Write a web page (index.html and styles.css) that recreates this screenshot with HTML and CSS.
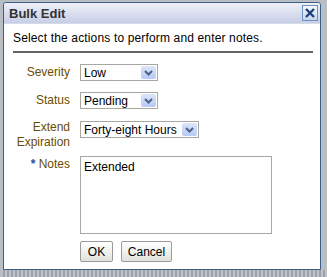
FILE: index.html
```html
<!DOCTYPE html>
<html lang="en">
<head>
    <meta charset="UTF-8">
    <title>Bulk Edit</title>
    <link rel="stylesheet" href="styles.css">
</head>
<body>
    <div class="dialog">
        <div class="titlebar">
            <span class="title">Bulk Edit</span>
            <span class="close">
                <svg width="10" height="10" viewBox="0 0 10 10"><path d="M1 1 L9 9 M9 1 L1 9" stroke="#1f3f7a" stroke-width="2.4"/></svg>
            </span>
        </div>
        <div class="content">
            <p class="intro">Select the actions to perform and enter notes.</p>
            <div class="rule"></div>

            <div class="row row-severity">
                <label class="label">Severity</label>
                <div class="select w-short"><span>Low</span><span class="arrow"><svg width="9" height="6" viewBox="0 0 9 6"><path d="M1 1 L4.5 4.5 L8 1" fill="none" stroke="#4d6185" stroke-width="2"/></svg></span></div>
            </div>
            <div class="row row-status">
                <label class="label">Status</label>
                <div class="select w-short"><span>Pending</span><span class="arrow"><svg width="9" height="6" viewBox="0 0 9 6"><path d="M1 1 L4.5 4.5 L8 1" fill="none" stroke="#4d6185" stroke-width="2"/></svg></span></div>
            </div>
            <div class="row row-extend">
                <label class="label two-line">Extend<br>Expiration</label>
                <div class="select w-long"><span>Forty-eight Hours</span><span class="arrow"><svg width="9" height="6" viewBox="0 0 9 6"><path d="M1 1 L4.5 4.5 L8 1" fill="none" stroke="#4d6185" stroke-width="2"/></svg></span></div>
            </div>
            <div class="row row-notes">
                <label class="label"><span class="req">*</span> Notes</label>
                <div class="notes">Extended</div>
            </div>
            <div class="buttons">
                <button class="btn btn-ok">OK</button>
                <button class="btn btn-cancel">Cancel</button>
            </div>
        </div>
    </div>
    <div class="behind"></div>
</body>
</html>
```

FILE: styles.css
```css
body {
    margin: 0;
    padding: 2px 0 0 3px;
    background: #b9bdc4;
    font-family: "Liberation Sans", Arial, sans-serif;
    font-size: 12px;
    height: 277px;
    overflow: hidden;
    box-sizing: border-box;
}
.dialog {
    width: 318px;
    height: 268px;
    background: white;
    border: 1px solid #3c5f85;
    border-radius: 3px 3px 0 0;
    box-sizing: border-box;
}
.titlebar {
    height: 20px;
    background: linear-gradient(#eef0f8, #c7cee6);
    border-bottom: 1px solid #d6dbe9;
    display: flex;
    align-items: center;
    justify-content: space-between;
    padding: 0 2px 0 5px;
    border-radius: 3px 3px 0 0;
}
.title {
    font-weight: bold;
    font-size: 13px;
    color: #333;
}
.close {
    width: 14px;
    height: 14px;
    border: 1px solid #6f8fbd;
    background: linear-gradient(#f4f7fc, #c6d5ee);
    display: flex;
    align-items: center;
    justify-content: center;
}
.content {
    padding: 7px 0 0 9px;
}
.intro {
    margin: 0;
    color: #000;
    letter-spacing: 0.15px;
}
.rule {
    width: 300px;
    border-top: 2px solid #666;
    margin-top: 6px;
}
.row {
    display: flex;
    align-items: flex-start;
}
.row-severity { margin-top: 11px; }
.row-status { margin-top: 11px; }
.row-extend { margin-top: 12px; }
.row-notes { margin-top: 6px; }
.label {
    width: 57px;
    text-align: right;
    color: #6b4d00;
    margin-right: 10px;
    padding-top: 1px;
    line-height: 15px;
}
.two-line {
    padding-top: 0;
    margin-top: -1px;
}
.req {
    color: #1f4f98;
    font-weight: bold;
}
.select {
    height: 17px;
    border: 1px solid #a8a8a0;
    box-sizing: border-box;
    display: flex;
    align-items: center;
    justify-content: space-between;
    padding: 0 1px 0 3px;
    color: #000;
}
.w-short { width: 78px; }
.w-long { width: 119px; }
.arrow {
    width: 15px;
    height: 13px;
    background: linear-gradient(#dce6fb, #b6c9f5);
    border-radius: 2px;
    display: flex;
    align-items: center;
    justify-content: center;
}
.notes {
    width: 192px;
    height: 78px;
    border: 1px solid #a8a8a0;
    box-sizing: border-box;
    padding: 3px 3px;
    color: #000;
}
.buttons {
    display: flex;
    gap: 8px;
    margin: 7px 0 0 67px;
}
.btn {
    height: 21px;
    font-family: "Liberation Sans", Arial, sans-serif;
    font-size: 12px;
    border: 1px solid #9a9a9a;
    border-radius: 2px;
    background: linear-gradient(#ffffff, #e2e2dc);
    padding: 0;
    color: #000;
}
.btn-ok { width: 33px; }
.btn-cancel { width: 51px; }
.behind {
    height: 7px;
    background: repeating-linear-gradient(90deg, #8a8f99 0 2px, #c4c8ce 2px 4px);
    opacity: 0.6;
}
```
